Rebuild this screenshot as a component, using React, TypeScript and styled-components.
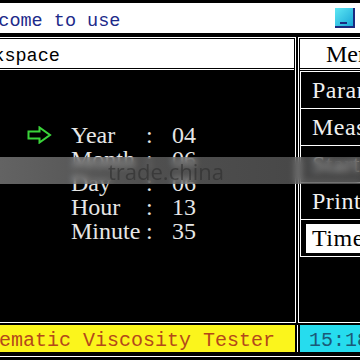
import React from "react";
import styled, { createGlobalStyle } from "styled-components";

const GlobalStyle = createGlobalStyle`
  html, body {
    margin: 0;
    padding: 0;
    background: #000;
    overflow: hidden;
  }
  body {
    width: 360px;
    height: 360px;
  }
`;

// the device screen is wider than the capture, so it hangs off both sides
const Screen = styled.div`
  position: relative;
  width: 454px;
  height: 360px;
  margin-left: -44px;
  padding-top: 3px;
  box-sizing: border-box;
  background: #000;
  display: flex;
  flex-direction: column;
  font-family: "Liberation Mono", "DejaVu Sans Mono", monospace;
`;

const TitleBar = styled.div`
  height: 30px;
  flex-shrink: 0;
  background: #fff;
  display: flex;
  align-items: center;
  justify-content: space-between;
  padding: 0 29px 0 9px;
  box-sizing: border-box;
  color: #1d2a8a;
  font-size: 18.5px;
`;

const TitleText = styled.span`
  padding-top: 6px;
`;

const WinButtons = styled.div`
  display: flex;
  gap: 6px;
`;

const Main = styled.div`
  margin-top: 4px;
  height: 286px;
  display: grid;
  grid-template-columns: 340px 112px;
  column-gap: 2px;
`;

const Pane = styled.section`
  border: 1px solid #fff;
  padding: 1px;
  box-sizing: border-box;
  display: flex;
  flex-direction: column;
  min-width: 0;
`;

const PaneHeader = styled.div<{ $center?: boolean }>`
  height: 29px;
  flex-shrink: 0;
  box-sizing: border-box;
  background: #fff;
  color: #000;
  font-family: ${(p) =>
    p.$center
      ? '"Liberation Serif", "DejaVu Serif", serif'
      : '"Liberation Mono", "DejaVu Sans Mono", monospace'};
  font-size: ${(p) => (p.$center ? "24px" : "18.5px")};
  display: flex;
  align-items: center;
  justify-content: ${(p) => (p.$center ? "center" : "flex-start")};
  padding: ${(p) => (p.$center ? "1px 0 0 0" : "5px 0 0 2px")};
  white-space: nowrap;
`;

const PaneBody = styled.div`
  flex: 1;
  margin-top: 1px;
  border-top: 1px solid #fff;
  padding: 1px 0 0 0;
  overflow: hidden;
`;

const DateGrid = styled.div`
  margin: 52px 0 0 69px;
  display: grid;
  grid-template-columns: 44px 75px 26px auto;
  grid-auto-rows: 24px;
  align-items: center;
  color: #e6e6e6;
  font-family: "Liberation Serif", "DejaVu Serif", serif;
  font-size: 24px;
  line-height: 24px;
`;

const ArrowCell = styled.div`
  display: flex;
  align-items: center;
  height: 24px;
`;

const MenuList = styled.ul`
  list-style: none;
  margin: 0;
  padding: 0;
  border-top: 1px solid #fff;
`;

const MenuItem = styled.li<{ $active?: boolean }>`
  height: 37px;
  box-sizing: border-box;
  border-left: 1px solid #fff;
  border-bottom: 1px solid #fff;
  display: flex;
  align-items: ${(p) => (p.$active ? "stretch" : "center")};
  padding: ${(p) => (p.$active ? "4px 0 3px 5px" : "0 0 0 11px")};
  color: #f0f0f0;
  font-family: "Liberation Serif", "DejaVu Serif", serif;
  font-size: 24px;
  letter-spacing: 0.5px;
  white-space: nowrap;
  overflow: hidden;
`;

const ActiveLabel = styled.span`
  flex: 1;
  background: #fff;
  color: #000;
  display: flex;
  align-items: center;
  padding-left: 6px;
`;

const StatusBar = styled.footer`
  margin-top: 2px;
  display: flex;
  padding-bottom: 4px;
  border-bottom: 1px solid #fff;
`;

const AppName = styled.div`
  width: 339px;
  height: 27px;
  background: #fbf51c;
  color: #b4481a;
  font-size: 20px;
  display: flex;
  align-items: center;
  padding: 3px 0 0 7px;
  box-sizing: border-box;
  white-space: nowrap;
`;

const ClockWrap = styled.div`
  flex: 1;
  margin-left: 2px;
  padding-left: 2px;
  border-left: 1px solid #fff;
  display: flex;
`;

const Clock = styled.div`
  flex: 1;
  background: #26dcee;
  color: #1a5a78;
  font-size: 20px;
  display: flex;
  align-items: center;
  padding: 3px 0 0 9px;
`;

const Watermark = styled.div`
  position: absolute;
  left: 0;
  top: 157px;
  width: 100%;
  height: 27px;
  background: linear-gradient(
    90deg,
    rgba(155, 155, 155, 0.68) 0%,
    rgba(125, 125, 125, 0.64) 40%,
    rgba(110, 110, 110, 0.6) 100%
  );
  backdrop-filter: blur(3px);
  display: flex;
  align-items: center;
  padding-left: 152px;
  box-sizing: border-box;
  font-family: "Open Sans", "Liberation Sans", sans-serif;
  font-size: 22px;
  color: rgba(45, 45, 45, 0.6);
`;

const dateRows = [
  { label: "Year", value: "04", selected: true },
  { label: "Month", value: "06" },
  { label: "Day", value: "06" },
  { label: "Hour", value: "13" },
  { label: "Minute", value: "35" },
];

const menu = ["Parameter", "Measure", "Start", "Print", "Time"];

function MinimizeButton() {
  return (
    <svg width="20" height="20" viewBox="0 0 20 20">
      <defs>
        <linearGradient id="minGrad" x1="0" y1="0" x2="1" y2="1">
          <stop offset="0" stopColor="#5ee8f4" />
          <stop offset="1" stopColor="#1aa6d8" />
        </linearGradient>
      </defs>
      <rect x="0" y="0" width="20" height="20" fill="#1b2a80" />
      <rect x="0" y="0" width="18" height="18" fill="url(#minGrad)" />
      <rect x="5" y="14" width="7" height="2" fill="#1b2a80" />
    </svg>
  );
}

function CloseButton() {
  return (
    <svg width="20" height="20" viewBox="0 0 20 20">
      <rect x="0" y="0" width="20" height="20" fill="#1b2a80" />
      <rect x="0" y="0" width="18" height="18" fill="#2ec0e4" />
      <path d="M5 5 L13 13 M13 5 L5 13" stroke="#1b2a80" strokeWidth="2" />
    </svg>
  );
}

function SelectArrow() {
  return (
    <svg width="25" height="18" viewBox="0 0 25 18">
      <path
        d="M1.5 5.5 H12.5 V1.5 L23 9 L12.5 16.5 V12.5 H1.5 Z"
        fill="none"
        stroke="#3ad43a"
        strokeWidth="2"
        strokeLinejoin="miter"
      />
    </svg>
  );
}

export default function App() {
  return (
    <>
      <GlobalStyle />
      <Screen>
        <TitleBar>
          <TitleText>Welcome to use</TitleText>
          <WinButtons>
            <MinimizeButton />
            <CloseButton />
          </WinButtons>
        </TitleBar>

        <Main>
          <Pane>
            <PaneHeader>Workspace</PaneHeader>
            <PaneBody>
              <DateGrid>
                {dateRows.map((row) => (
                  <React.Fragment key={row.label}>
                    <ArrowCell>{row.selected && <SelectArrow />}</ArrowCell>
                    <span>{row.label}</span>
                    <span>:</span>
                    <span>{row.value}</span>
                  </React.Fragment>
                ))}
              </DateGrid>
            </PaneBody>
          </Pane>

          <Pane>
            <PaneHeader $center>Menu</PaneHeader>
            <PaneBody>
              <MenuList>
                {menu.map((item) =>
                  item === "Time" ? (
                    <MenuItem key={item} $active>
                      <ActiveLabel>{item}</ActiveLabel>
                    </MenuItem>
                  ) : (
                    <MenuItem key={item}>{item}</MenuItem>
                  )
                )}
              </MenuList>
            </PaneBody>
          </Pane>
        </Main>

        <StatusBar>
          <AppName>Kinematic Viscosity Tester</AppName>
          <ClockWrap>
            <Clock>15:18</Clock>
          </ClockWrap>
        </StatusBar>

        <Watermark>trade.china</Watermark>
      </Screen>
    </>
  );
}
